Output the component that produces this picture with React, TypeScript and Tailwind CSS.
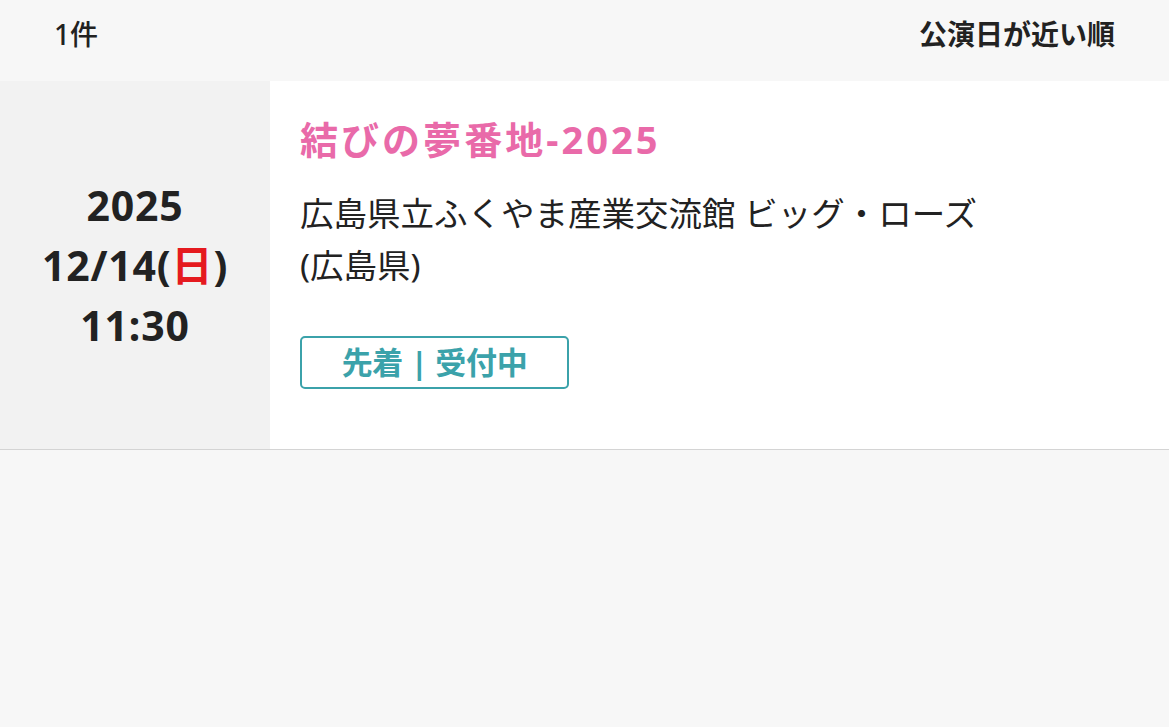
import React from "react";

const FONT = { fontFamily: '"Noto Sans", "Noto Sans CJK JP", sans-serif' };

type Event = {
  year: string;
  date: string;
  weekday: string;
  time: string;
  title: string;
  venue: string;
  pref: string;
  status: string;
};

const events: Event[] = [
  {
    year: "2025",
    date: "12/14",
    weekday: "日",
    time: "11:30",
    title: "結びの夢番地-2025",
    venue: "広島県立ふくやま産業交流館 ビッグ・ローズ",
    pref: "(広島県)",
    status: "先着 | 受付中",
  },
];

function EventRow({ ev }: { ev: Event }) {
  return (
    <div className="flex bg-white border-b border-[#d4d4d4]">
      {/* date column */}
      <div className="w-[270px] shrink-0 bg-[#f2f2f2] flex flex-col items-center justify-center text-[41px] font-bold leading-[60px] tracking-[0.02em] text-[#222]">
        <div>{ev.year}</div>
        <div>
          {ev.date}(<span className="text-[#e51a1f]">{ev.weekday}</span>)
        </div>
        <div>{ev.time}</div>
      </div>

      {/* detail */}
      <div className="flex-1 pl-[30px] pt-[34px] pb-[60px]">
        <h2 className="text-[38px] font-bold leading-[48px] tracking-[0.08em] text-[#e96aa9]">{ev.title}</h2>
        <div className="mt-[24px] text-[33.5px] leading-[52px] text-[#222]">
          <div>{ev.venue}</div>
          <div>{ev.pref}</div>
        </div>
        <div className="mt-[45px] w-[269px] h-[53px] rounded-[5px] border-2 border-[#3ba2aa] flex items-center justify-center text-[31px] font-bold tracking-[-0.01em] text-[#3ba2aa]">
          {ev.status}
        </div>
      </div>
    </div>
  );
}

export default function App() {
  return (
    <div style={FONT} className="min-h-[727px] bg-[#f7f7f7]">
      <div className="h-[81px] flex justify-between items-start px-[54px] pt-[17px] text-[28px] leading-[34px] text-[#222]">
        <div className="font-medium">{events.length}件</div>
        <div className="font-bold">公演日が近い順</div>
      </div>
      {events.map((ev, i) => (
        <EventRow key={i} ev={ev} />
      ))}
    </div>
  );
}
